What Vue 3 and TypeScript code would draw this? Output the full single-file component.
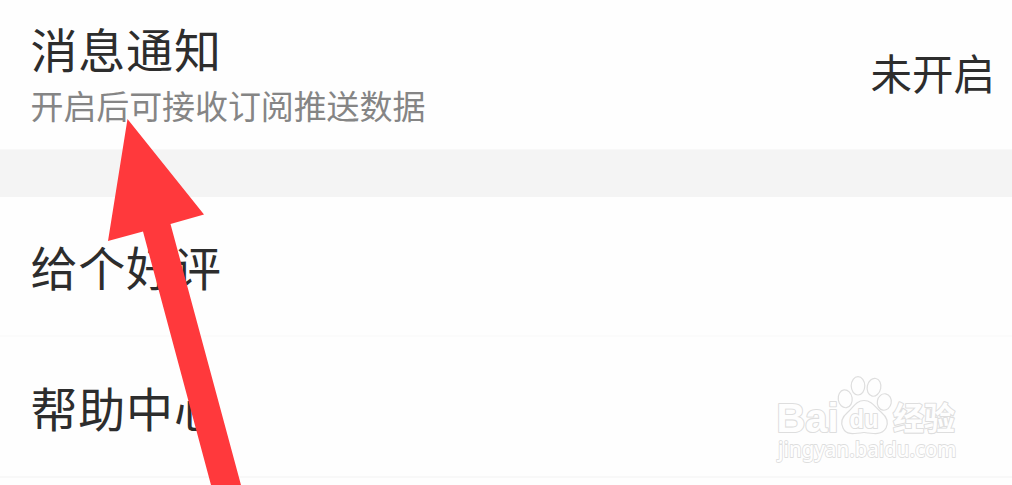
<script setup lang="ts">
interface Row {
  title: string
  cls: string
}

const rows: Row[] = [
  { title: '给个好评', cls: 'rate' },
  { title: '帮助中心', cls: 'help' },
]
</script>

<template>
  <main class="page">
    <section class="notice">
      <div class="copy">
        <div class="title">消息通知</div>
        <div class="sub">开启后可接收订阅推送数据</div>
      </div>
      <div class="state">未开启</div>
    </section>
    <div class="gap"></div>
    <section v-for="row in rows" :key="row.cls" class="row" :class="row.cls">
      <div class="title">{{ row.title }}</div>
    </section>

    <svg class="overlay" width="1012" height="485" viewBox="0 0 1012 485">
      <polygon class="arrow" points="127.5,119 204,214.5 170.5,224 241,485 211,485 143,231.5 108,241" />
      <g class="mark">
        <ellipse cx="845.2" cy="398.8" rx="7" ry="9" transform="rotate(-8 845.2 398.8)" />
        <ellipse cx="858" cy="385.8" rx="6.8" ry="9.2" />
        <ellipse cx="874" cy="387.3" rx="6.8" ry="9" transform="rotate(12 874 387.3)" />
        <ellipse cx="884.3" cy="402" rx="7" ry="8.3" transform="rotate(10 884.3 402)" />
        <path d="M864 400.5C856 400.5 853 408 848 412C842 417 840.5 423 843 428C846 435 853 434 864 432.5C875 434 882 435 886 428C889 422 887 417 881 412C875 407 872 400.5 864 400.5Z" />
        <text class="brand" x="776.5" y="432" textLength="62" lengthAdjust="spacingAndGlyphs">Bai</text>
        <text class="du" x="849.5" y="428" textLength="29" lengthAdjust="spacingAndGlyphs">du</text>
        <text class="cjk" x="893" y="429.5" textLength="62" lengthAdjust="spacingAndGlyphs">经验</text>
        <text class="site" x="778" y="456.5" textLength="178.5" lengthAdjust="spacingAndGlyphs">jingyan.baidu.com</text>
      </g>
    </svg>
  </main>
</template>

<style>
body {
  margin: 0;
  background: #fefefe;
}
</style>

<style scoped>
.page {
  position: relative;
  width: 1012px;
  height: 485px;
  overflow: hidden;
  background: #fefefe;
  font-family: "Noto Sans CJK SC", sans-serif;
  color: #2d2d2d;
}
.notice {
  display: flex;
  justify-content: space-between;
  box-sizing: border-box;
  height: 149px;
  padding: 18px 17px 0 30.5px;
}
.title {
  font-size: 47px;
  line-height: 60px;
  letter-spacing: 0.8px;
  white-space: nowrap;
}
.sub {
  margin-top: 7px;
  font-size: 33px;
  line-height: 40px;
  letter-spacing: -0.1px;
  color: #858585;
}
.state {
  margin-top: 24px;
  font-size: 41.5px;
  line-height: 60px;
}
.gap {
  height: 48px;
  background: #f4f4f4;
  border-top: 1px solid #f8f8f8;
  box-sizing: border-box;
}
.row {
  display: flex;
  align-items: center;
  box-sizing: border-box;
  height: 140px;
  padding: 0 30.5px;
  border-bottom: 2px solid #fbfbfb;
}
.help {
  height: 141px;
  border-bottom-color: #f8f8f8;
}
.overlay {
  position: absolute;
  inset: 0;
}
.arrow {
  fill: #ff393c;
}
.mark {
  fill: #fefefe;
  stroke: #dedede;
  stroke-width: 1.2;
  stroke-linejoin: round;
}
.mark text {
  paint-order: stroke;
  stroke-width: 2.2;
}
.mark .brand {
  font: 700 41px "Liberation Sans", sans-serif;
}
.mark .du {
  font: 700 26px "Liberation Sans", sans-serif;
}
.mark .cjk {
  font: 700 32px "Noto Sans CJK SC", sans-serif;
}
.mark .site {
  font: 500 22px "Noto Sans", sans-serif;
  stroke-width: 1.8;
}
</style>
